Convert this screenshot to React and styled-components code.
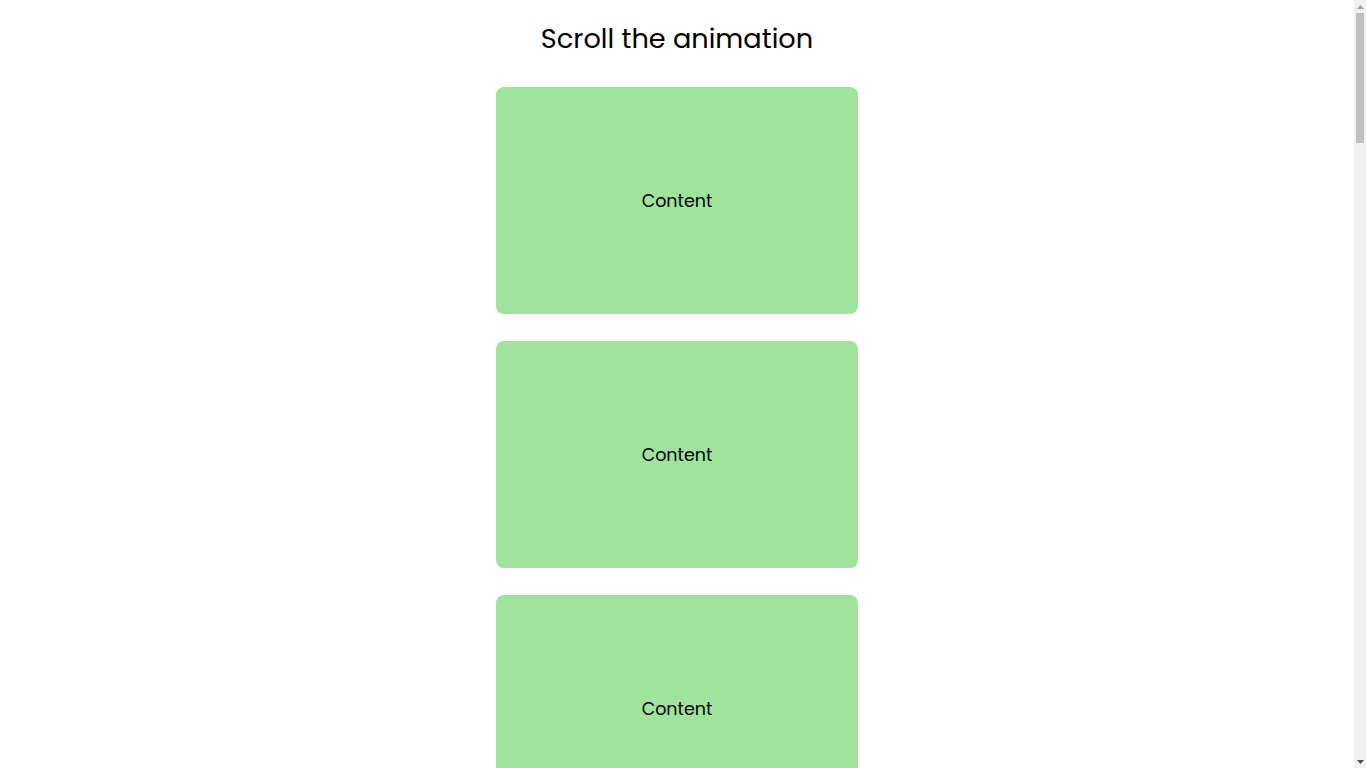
import React from "react";
import styled, { createGlobalStyle } from "styled-components";

const Global = createGlobalStyle`
  html, body { margin: 0; padding: 0; background: #fff; overflow: hidden; }
  body { font-family: "Poppins", "Open Sans", "DejaVu Sans", sans-serif; color: #000; }
`;

const Frame = styled.div`
  display: flex;
  height: 100vh;
  overflow: hidden;
`;

const Page = styled.main`
  flex: 1;
  display: flex;
  flex-direction: column;
  align-items: center;
  padding: 21px 0 60px;
  overflow: hidden;
`;

const Title = styled.h1`
  margin: 0 0 30px;
  font-size: 27.2px;
  line-height: 36px;
  font-weight: 400;
`;

const List = styled.div`
  display: flex;
  flex-direction: column;
  gap: 27px;
`;

const Card = styled.div`
  flex: none;
  width: 362px;
  height: 227px;
  border-radius: 8px;
  background: #9fe39c;
  display: flex;
  align-items: center;
  justify-content: center;
  font-size: 17.5px;
`;

const ScrollBar = styled.aside`
  flex: none;
  width: 12px;
  background: #f1f1f1;
  display: flex;
  flex-direction: column;
`;

const Arrow = styled.div`
  flex: none;
  height: 13px;
  display: flex;
  align-items: center;
  justify-content: center;
`;

const Track = styled.div`
  flex: 1;
  padding: 0 2px;
`;

const Thumb = styled.div`
  height: 130px;
  background: #c1c1c1;
`;

const Tri = ({ up, color }) => (
  <svg width="7" height="4" viewBox="0 0 7 4">
    <polygon points={up ? "3.5,0 7,4 0,4" : "0,0 7,0 3.5,4"} fill={color} />
  </svg>
);

export default function App() {
  const items = Array.from({ length: 17 }, (_, i) => i);
  return (
    <>
      <Global />
      <Frame>
        <Page>
          <Title>Scroll the animation</Title>
          <List>
            {items.map((i) => (
              <Card key={i}>Content</Card>
            ))}
          </List>
        </Page>
        <ScrollBar>
          <Arrow>
            <Tri up color="#a3a3a3" />
          </Arrow>
          <Track>
            <Thumb />
          </Track>
          <Arrow>
            <Tri color="#505050" />
          </Arrow>
        </ScrollBar>
      </Frame>
    </>
  );
}
